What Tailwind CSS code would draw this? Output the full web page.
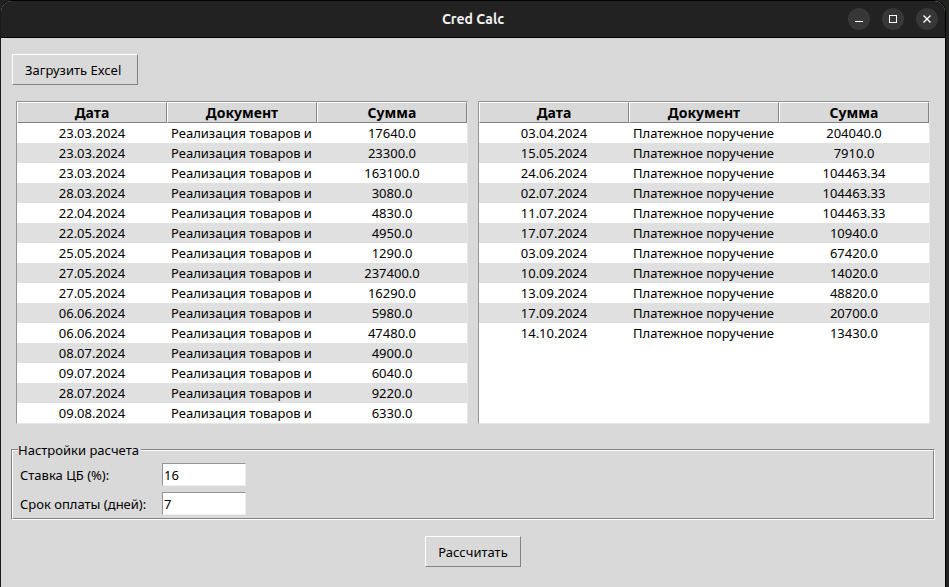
<!DOCTYPE html>
<html lang="ru">
<head>
<meta charset="utf-8">
<title>Cred Calc</title>
<script src="https://cdn.jsdelivr.net/npm/@tailwindcss/browser@4"></script>
</head>
<body class="min-h-screen flex bg-[#1f231e] pr-[3px] font-['Noto_Sans','Open_Sans',sans-serif] text-[13px] leading-[20px] text-black">
<div class="flex-1 flex flex-col rounded-t-xl border border-b-0 border-black border-l-[#1c191c] bg-[#d9d9d9] overflow-hidden">
  <header class="grid grid-cols-[1fr_auto_1fr] items-center h-[37px] bg-[#222222] border-b border-black pl-[7px]  pr-[7px]">
    <h1 class="col-start-2 text-[14px] font-bold text-[#f2f2f2] font-['Ubuntu','Noto_Sans',sans-serif]">Cred Calc</h1>
    <div class="flex justify-end gap-3">
      <button aria-label="Свернуть" class="size-[22px] rounded-full bg-[#373737]"><svg class="size-[22px]" viewBox="0 0 22 22" shape-rendering="crispEdges"><path d="M7 13h8v1H7z" fill="#fff"/></svg></button>
      <button aria-label="Развернуть" class="size-[22px] rounded-full bg-[#373737]"><svg class="size-[22px]" viewBox="0 0 22 22" shape-rendering="crispEdges"><path d="M7.5 7.5h7v7h-7z" fill="none" stroke="#fff"/></svg></button>
      <button aria-label="Закрыть" class="size-[22px] rounded-full bg-[#373737]"><svg class="size-[22px]" viewBox="0 0 22 22"><path d="M7.5 7.5l7 7M14.5 7.5l-7 7" fill="none" stroke="#fff" stroke-width="1.4"/></svg></button>
    </div>
  </header>
  <main class="flex flex-col px-[10px] pt-4">
    <button class="self-start ml-px h-[31px] min-w-[126px] px-3 text-left border border-t-white border-l-white border-b-[#828282] border-r-[#828282]">Загрузить Excel</button>
    <div class="flex gap-[10px] mt-4 px-[5px]">
      <div class="flex-1 min-w-0 bg-white border border-t-[#949494] border-l-[#949494] border-b-[#e6e6e6] border-r-[#e6e6e6]">
        <table class="w-full table-fixed border-separate border-spacing-0 text-center" id="sales"></table>
      </div>
      <div class="flex-1 min-w-0 bg-white border border-t-[#949494] border-l-[#949494] border-b-[#e6e6e6] border-r-[#e6e6e6]">
        <table class="w-full table-fixed border-separate border-spacing-0 text-center" id="payments"></table>
      </div>
    </div>
    <fieldset class="relative mt-[25px] border border-t-[#828282] border-l-[#828282] border-b-white border-r-white">
      <legend class="absolute -top-[10px] left-[6px] pr-[2px] bg-[#d9d9d9]">Настройки расчета</legend>
      <div class="grid grid-cols-[142px_84px] gap-y-[6px] items-center pt-3 pb-[3px] pl-[7px] border border-t-white border-l-white border-b-[#828282] border-r-[#828282]">
        <label for="rate">Ставка ЦБ (%):</label>
        <input id="rate" value="16" class="w-full h-[23px] px-px bg-white border border-t-[#949494] border-l-[#949494] border-b-[#eeeeee] border-r-[#eeeeee]">
        <label for="term">Срок оплаты (дней):</label>
        <input id="term" value="7" class="w-full h-[23px] px-px bg-white border border-t-[#949494] border-l-[#949494] border-b-[#eeeeee] border-r-[#eeeeee]">
      </div>
    </fieldset>
    <button class="self-center mt-4 h-[31px] px-3 border border-t-white border-l-white border-b-[#828282] border-r-[#828282]">Рассчитать</button>
  </main>
</div>
<script>
const sales = [['23.03.2024','17640.0'],['23.03.2024','23300.0'],['23.03.2024','163100.0'],['28.03.2024','3080.0'],['22.04.2024','4830.0'],['22.05.2024','4950.0'],['25.05.2024','1290.0'],['27.05.2024','237400.0'],['27.05.2024','16290.0'],['06.06.2024','5980.0'],['06.06.2024','47480.0'],['08.07.2024','4900.0'],['09.07.2024','6040.0'],['28.07.2024','9220.0'],['09.08.2024','6330.0']];
const payments = [['03.04.2024','204040.0'],['15.05.2024','7910.0'],['24.06.2024','104463.34'],['02.07.2024','104463.33'],['11.07.2024','104463.33'],['17.07.2024','10940.0'],['03.09.2024','67420.0'],['10.09.2024','14020.0'],['13.09.2024','48820.0'],['17.09.2024','20700.0'],['14.10.2024','13430.0']];
function fill(id, rows, doc) {
  const head = ['Дата', 'Документ', 'Сумма'].map(t => `<th class="h-[21px] p-0 pt-px leading-[18px] text-[14px] font-bold bg-[#d9d9d9] border border-t-white border-l-white border-b-[#828282] border-r-[#828282]">${t}</th>`).join('');
  const body = rows.map(([date, sum]) => `<tr class="even:bg-[#e0e0e0]"><td class="h-5 p-0">${date}</td><td class="h-5 p-0"><div class="mx-1 text-left whitespace-nowrap overflow-hidden">${doc}</div></td><td class="h-5 p-0">${sum}</td></tr>`).join('');
  document.getElementById(id).innerHTML = `<thead><tr>${head}</tr></thead><tbody>${body}</tbody>`;
}
fill('sales', sales, 'Реализация товаров и');
fill('payments', payments, 'Платежное поручение');
</script>
</body>
</html>
